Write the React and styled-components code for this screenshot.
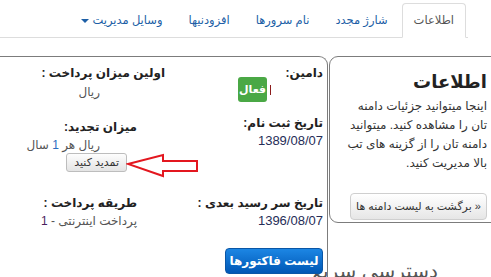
import React from "react";
import styled, { createGlobalStyle } from "styled-components";

const GlobalStyle = createGlobalStyle`
  html, body {
    margin: 0;
    padding: 0;
    overflow: hidden;
    background: #fff;
  }
  body {
    font-family: "Liberation Sans", "DejaVu Sans", sans-serif;
    font-size: 12px;
    color: #333;
  }
`;

const Page = styled.div`
  width: 491px;
  height: 277px;
  overflow: hidden;
`;

const TabBar = styled.ul`
  list-style: none;
  margin: 0;
  padding: 3px 2px 0 0;
  width: 466px;
  height: 34px;
  display: flex;
  direction: rtl;
  border-bottom: 1px solid #ddd;
`;

const Tab = styled.li`
  height: ${(p) => (p.$active ? 35 : 34)}px;
  box-sizing: border-box;
  line-height: 33px;
  padding: 0 11px;
  margin-left: 2px;
  border: 1px solid ${(p) => (p.$active ? "#ddd" : "transparent")};
  border-bottom-color: transparent;
  border-radius: 4px 4px 0 0;
  background: #fff;
  color: ${(p) => (p.$active ? "#555" : "#1d5fa6")};
  font-size: 11.5px;
  white-space: nowrap;
`;

const Caret = styled.span`
  display: inline-block;
  margin-right: 3px;
  vertical-align: middle;
  border-top: 4px solid #1d5fa6;
  border-left: 4px solid transparent;
  border-right: 4px solid transparent;
`;

const Main = styled.div`
  display: flex;
  margin-top: 18px;
`;

const ContentBox = styled.div`
  position: relative;
  width: 327px;
  height: 230px;
  flex: 0 0 auto;
  display: flex;
  border-top: 1px solid #7c7c7c;
  border-right: 1px solid #7c7c7c;
  border-top-right-radius: 9px;
`;

const Column = styled.div`
  flex: 0 0 auto;
  width: ${(p) => p.$width}px;
  padding-right: ${(p) => p.$pad}px;
  direction: rtl;
  text-align: right;
`;

const Label = styled.div`
  font-weight: bold;
  color: #222;
  line-height: ${(p) => p.$lh || 18}px;
  margin-top: ${(p) => p.$mt || 0}px;
  padding-right: ${(p) => p.$indent || 0}px;
  white-space: nowrap;
`;

const Value = styled.div`
  color: ${(p) => p.$color || "#555"};
  font-size: ${(p) => p.$size || 12}px;
  line-height: ${(p) => p.$lh || 18}px;
  margin-top: ${(p) => p.$mt || 0}px;
  padding-right: ${(p) => p.$indent || 0}px;
  white-space: nowrap;
`;

const Num = styled.span`
  color: ${(p) => p.$color};
`;

const SmallButton = styled.button`
  display: block;
  width: fit-content;
  height: 19px;
  margin: ${(p) => p.$mt || 0}px ${(p) => p.$indent || 0}px 0 0;
  padding: 0 7px;
  font-family: inherit;
  font-size: 11px;
  color: #333;
  background: linear-gradient(#fdfdfd, #e4e4e4);
  border: 1px solid #bdbdbd;
  border-radius: 3px;
  line-height: 17px;
`;

const StatusRow = styled.div`
  display: flex;
  align-items: center;
  gap: 3px;
  margin-top: ${(p) => p.$mt || 0}px;
  padding-right: ${(p) => p.$indent || 0}px;
`;

const Cursor = styled.span`
  width: 1px;
  height: 10px;
  background: #8c1c1c;
`;

const Badge = styled.span`
  width: 29px;
  height: 25px;
  border-radius: 3px;
  background: #4aa845;
  color: #fff;
  font-weight: bold;
  font-size: 11px;
  line-height: 25px;
  text-align: center;
`;

const PrimaryButton = styled.button`
  display: block;
  width: 98px;
  height: 26px;
  margin-top: ${(p) => p.$mt || 0}px;
  padding: 0;
  font-family: inherit;
  font-size: 12px;
  font-weight: bold;
  color: #fff;
  background: linear-gradient(#1c86e4, #0057b5);
  border: 1px solid #0a56a6;
  border-radius: 4px;
`;

const Arrow = styled.svg`
  position: absolute;
  left: 126px;
  top: 96px;
`;

const Sidebar = styled.div`
  flex: 0 0 auto;
  width: 175px;
  margin-left: 1px;
  direction: rtl;
`;

const InfoBox = styled.div`
  width: 137px;
  height: 152px;
  padding: 13px 16px 0 20px;
  border: 1px solid #7c7c7c;
  border-radius: 9px;
`;

const BoxTitle = styled.h3`
  margin: 0;
  font-size: 18px;
  line-height: 24px;
  color: #222;
  font-weight: bold;
`;

const BoxText = styled.p`
  margin: 3px 0 0;
  line-height: 19px;
  color: #333;
  white-space: nowrap;
`;

const BackButton = styled.button`
  display: block;
  width: 137px;
  height: 27px;
  margin-top: 20px;
  padding: 0;
  font-family: inherit;
  font-size: 11px;
  color: #333;
  background: linear-gradient(#ffffff, #e6e6e6);
  border: 1px solid #cfcfcf;
  border-radius: 4px;
  direction: rtl;
`;

const SideHeading = styled.h2`
  margin: 33px 0 0;
  padding-right: 66px;
  font-size: 20px;
  font-weight: normal;
  line-height: 30px;
  color: #555;
  white-space: nowrap;
`;

export default function App() {
  return (
    <Page>
      <GlobalStyle />
      <TabBar>
        <Tab $active>اطلاعات</Tab>
        <Tab>شارژ مجدد</Tab>
        <Tab>نام سرورها</Tab>
        <Tab>افزودنیها</Tab>
        <Tab>
          وسایل مدیریت
          <Caret />
        </Tab>
      </TabBar>

      <Main>
        <ContentBox>
          <Column $width={165} $pad={5}>
            <Label $mt={7}>اولین میزان پرداخت :</Label>
            <Value $mt={1} $indent={65}>ریال</Value>
            <Label $mt={17} $indent={28}>میزان تجدید:</Label>
            <Value $mt={1} $lh={17} $indent={65}>
              ریال هر <Num $color="#2a6cc0">1</Num> سال
            </Value>
            <SmallButton $mt={-1} $indent={38}>تمدید کنید</SmallButton>
            <Label $mt={22} $indent={28}>طریقه پرداخت :</Label>
            <Value $indent={28}>
              پرداخت اینترنتی - <Num $color="#4a1f5e">1</Num>
            </Value>
          </Column>

          <Column $width={153} $pad={4}>
            <Label $lh={16} $mt={8}>دامین:</Label>
            <StatusRow $mt={-4} $indent={52}>
              <Cursor />
              <Badge>فعال</Badge>
            </StatusRow>
            <Label $mt={12}>تاریخ ثبت نام:</Label>
            <Value $lh={17} $size={13} $color="#262d57">1389/08/07</Value>
            <Label $mt={45}>تاریخ سر رسید بعدی :</Label>
            <Value $lh={17} $size={13} $color="#262d57">1396/08/07</Value>
            <PrimaryButton $mt={19}>لیست فاکتورها</PrimaryButton>
          </Column>

          <Arrow width="74" height="25" viewBox="0 0 74 25">
            <path
              d="M2 11 L37 2 L37 8 L71 8 L71 18 L37 18 L37 23 Z"
              fill="none"
              stroke="#e3171f"
              strokeWidth="2"
              strokeLinejoin="miter"
            />
          </Arrow>
        </ContentBox>

        <Sidebar>
          <InfoBox>
            <BoxTitle>اطلاعات</BoxTitle>
            <BoxText>
              اینجا میتوانید جزئیات دامنه
              <br />
              تان را مشاهده کنید. میتوانید
              <br />
              دامنه تان را از گزینه های تب
              <br />
              بالا مدیریت کنید.
            </BoxText>
            <BackButton>« برگشت به لیست دامنه ها</BackButton>
          </InfoBox>
          <SideHeading>دسترسی سریع</SideHeading>
        </Sidebar>
      </Main>
    </Page>
  );
}
